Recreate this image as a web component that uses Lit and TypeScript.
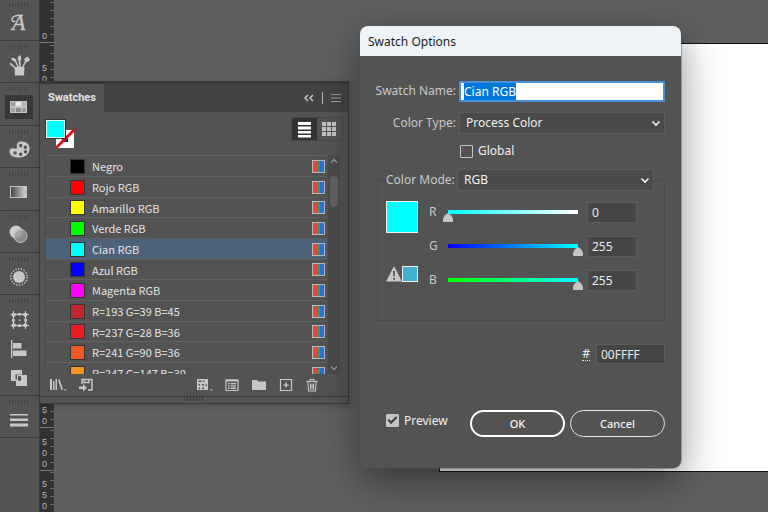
import { LitElement, html, svg, css } from "lit";
import { customElement, property, query } from "lit/decorators.js";
import { classMap } from "lit/directives/class-map.js";
import { styleMap } from "lit/directives/style-map.js";

const icon = (w: number, h: number, body: unknown) =>
  html`<svg width=${w} height=${h} viewBox="0 0 ${w} ${h}" fill="currentColor" aria-hidden="true">${body}</svg>`;

const toolIcons: Record<string, unknown> = {
  Glyphs: icon(26, 24, svg`
    <text x="6" y="19" font-family="Liberation Serif, serif" font-style="italic" font-size="22" stroke="currentColor" stroke-width=".4">A</text>
    <path d="M17 4.500C11 3.500 6 5 6 8.500C6 10.500 8 11 9 10" fill="none" stroke="currentColor" stroke-width="1.400"/>`),
  Brushes: icon(26, 24, svg`
    <path d="M8.500 14h10l-.5 8.500H9zM11.500 14L8.500 8l1.500-.5L13 14zM13.200 14l-.6-7h1.800l.4 7zM16 14l3-6 1.400.8L17.600 14z"/>
    <path d="M10.500 8.500C7 9 5 7.500 5.500 4.500 8 5 10.500 5.500 10.500 8.500zM12.200 7.500C11 5 12 3 14.200 2c1 2 1.500 4 .5 5.500zM18 6l3.500-2.500 2.500 3c-1 2-3 3-4.500 2.500zM8 15l-4.500-4.200 1.200-1L9.500 14z"/>`),
  Swatches: icon(26, 24, svg`
    <rect x="4" y="6" width="17" height="12" fill="#c4c4c4"/>
    <path d="M5 7h4v4H5z" fill="#9d9d9d"/><path d="M10 7h5v4h-5z" fill="#ececec"/><path d="M16 7h4v4h-4z" fill="#b4b4b4"/>
    <path d="M5 13h4v4H5z" fill="#a4a4a4"/><path d="M10 13h5v4h-5z" fill="#8c8c8c"/><path d="M16 13h4v4h-4z" fill="#9a9a9a"/>`),
  Color: icon(26, 24, svg`
    <path fill-rule="evenodd" d="M15 3.500c6 0 9 3.500 8.500 8-.6 5-4.700 8-10.500 8-4.500 0-9-1.500-9.500-5.500-.4-3.200 2.200-4 4.400-3.500 2 .5 3.600 0 3.100-1.900C10.300 6 11.500 3.500 15 3.500zM14.600 5.800a1.700 1.700 0 1 0 .1 0zM19.300 7.600a1.700 1.700 0 1 0 .1 0zM19.400 12a1.700 1.700 0 1 0 .1 0zM14.600 14.500a1.700 1.700 0 1 0 .1 0zM9 13.200a1.700 1.700 0 1 0 .1 0z"/>`),
  Gradient: icon(26, 24, svg`
    <defs><linearGradient id="g"><stop offset="0" stop-color="#444"/><stop offset="1" stop-color="#d4d4d4"/></linearGradient></defs>
    <rect x="4.500" y="6.500" width="16" height="11" fill="url(#g)" stroke="#c6c6c6"/>`),
  Transparency: icon(26, 24, svg`
    <circle cx="10" cy="9" r="6.500" fill="#cbcbcb"/>
    <circle cx="14.500" cy="13" r="6.500" fill="#9a9a9a" fill-opacity=".8" stroke="#c4c4c4"/>`),
  Appearance: icon(26, 24, svg`
    <circle cx="13" cy="12" r="6"/>
    <circle cx="13" cy="12" r="8.200" fill="none" stroke="currentColor" stroke-width="1.500" stroke-dasharray="1.300 1.580"/>`),
  Artboards: icon(26, 24, svg`
    <rect x="7.500" y="6.500" width="12" height="11" fill="none" stroke="currentColor" stroke-width="1.300"/>
    <path d="M6 5h3.500v3.500H6zM12 5h3v2.500h-3zM17.500 5H21v3.500h-3.500zM6 15.500h3.500V19H6zM12 16.500h3V19h-3zM17.500 15.500H21V19h-3.500zM6 11h2.500v2.500H6zM18.500 11H21v2.500h-2.500zM13 11.500h1.500V13H13z"/>
    <path d="M7.500 3v2M19.500 3v2M4.500 6.500h2M20 6.500h3M4.500 17.500h2M20 17.500h3M7.500 18v3M19.500 18v3" stroke="currentColor"/>`),
  Align: icon(26, 24, svg`<path d="M5 3h1.300v18H5zM7 6h8.500v5.500H7zM7 13.500h13.500V19H7z"/>`),
  Pathfinder: icon(26, 24, svg`
    <path fill-rule="evenodd" d="M5 4h11v5h5v11H10v-5H5zM9.500 8.500v5h1.500V9h4V8.500zM12 10.500v4h3v-4z"/>
    <path d="M12 10.500h3v4h-3z" fill="#4a4a4a"/>`),
  Stroke: icon(26, 24, svg`<path d="M4 6h18v1.500H4zM4 10.500h18V13H4zM4 15.500h18v3H4z"/>`),
};

const toolGroups = [
  ["Glyphs"], ["Brushes"], ["Swatches"], ["Color"], ["Gradient"], ["Transparency"], ["Appearance"],
  ["Artboards", "Align", "Pathfinder"], ["Stroke"],
];

const swatches = [
  { name: "Negro", color: "#000000" },
  { name: "Rojo RGB", color: "#ff0000" },
  { name: "Amarillo RGB", color: "#ffff00" },
  { name: "Verde RGB", color: "#00ff00" },
  { name: "Cian RGB", color: "#00ffff" },
  { name: "Azul RGB", color: "#0000ff" },
  { name: "Magenta RGB", color: "#ff00ff" },
  { name: "R=193 G=39 B=45", color: "#c1272d" },
  { name: "R=237 G=28 B=36", color: "#ed1c24" },
  { name: "R=241 G=90 B=36", color: "#f15a24" },
  { name: "R=247 G=147 B=30", color: "#f7931e" },
];

@customElement("tool-dock")
export class ToolDock extends LitElement {
  static styles = css`
    :host { display: block; background: #535353; border-right: 1px solid #3a3a3a; color: #c8c8c8; }
    .group { box-sizing: border-box; border-bottom: 1px solid #3a3a3a; padding: 12px 5px 1px; display: flex; flex-direction: column; gap: 5px; position: relative; min-height: 42px; }
    .group:first-child { margin-top: -1px; }
    .group:nth-child(3), .group:nth-child(5) { min-height: 43px; }
    .group::before { content: ""; position: absolute; top: 4px; left: 9px; width: 20px; height: 4px; background: repeating-linear-gradient(90deg, #424242 0 1px, transparent 1px 3px); }
    .group.many { padding-top: 13px; padding-bottom: 5px; }
    button { all: unset; display: flex; align-items: center; justify-content: center; height: 24px; width: 28px; }
    button.on { background: #383838; }
  `;
  render() {
    return toolGroups.map((g) => html`
      <div class=${classMap({ group: true, many: g.length > 1 })}>
        ${g.map((t) => html`<button class=${classMap({ on: t === "Swatches" })} aria-label=${t}>${toolIcons[t]}</button>`)}
      </div>`);
  }
}

@customElement("side-ruler")
export class SideRuler extends LitElement {
  static styles = css`
    :host { display: block; background: #323232; overflow: hidden; }
    .cell { box-sizing: border-box; height: 43px; border-bottom: 1px solid #777; display: flex; flex-direction: column; justify-content: flex-end; font: 9px/11px "Liberation Sans", sans-serif; color: #b8b8b8; padding-left: 2px;
      background: repeating-linear-gradient(0deg, transparent 0 7px, #6c6c6c 7px 8px) right bottom / 4px 100% no-repeat; }
    .cell:nth-child(4n) { height: 42px; }
  `;
  render() {
    return Array.from({ length: 12 }, (_, i) => html`
      <div class="cell">${String(i * 50).split("").map((d) => html`<span>${d}</span>`)}</div>`);
  }
}

@customElement("swatches-panel")
export class SwatchesPanel extends LitElement {
  static styles = css`
    :host { display: block; box-sizing: border-box; background: #535353; border: 1px solid #383838; border-top-width: 3px; color: #e4e4e4; font: 11px/16px "Noto Sans", sans-serif; box-shadow: 2px 2px 6px rgba(0, 0, 0, .2); }
    button { all: unset; display: flex; align-items: center; justify-content: center; color: #c6c6c6; }
    header { display: flex; background: #434343; height: 28px; }
    h2 { margin: 0; font: 700 11px/28px Roboto, sans-serif; background: #535353; width: 64px; text-align: center; }
    .tools { margin-left: auto; display: flex; align-items: center; gap: 8px; padding-right: 6px; }
    .bar { width: 1px; height: 12px; background: #b5b5b5; }
    .top { display: flex; justify-content: space-between; height: 43px; padding: 5px 5px 0 4px; box-sizing: border-box; }
    .views { display: flex; height: 22px; border: 1px solid #484848; }
    .views button { width: 25px; height: 22px; }
    .views .on { background: #323232; color: #fff; }
    .body { display: flex; height: 219px; margin: 0 8px 0 5px; }
    ul { flex: 1; list-style: none; margin: 0; padding: 0; overflow: hidden; border-left: 1px solid #4a4a4a; }
    li { box-sizing: border-box; height: 21px; display: flex; align-items: center; border-top: 1px solid #606060; padding: 0 2px 0 24px; gap: 7px; font: 11px/16px "Noto Sans CJK SC", sans-serif; }
    li:nth-child(3n) { height: 20px; }
    li.on { background: #4d6179; }
    .chip { width: 15px; height: 15px; box-sizing: border-box; border: 1px solid #333; }
    .name { flex: 1; white-space: nowrap; }
    .scroll { width: 12px; margin-left: 1px; background: #4b4b4b; display: flex; flex-direction: column; align-items: center; justify-content: space-between; }
    .thumb { width: 8px; height: 31px; border-radius: 4px; background: #626262; margin: 9px 0 auto; }
    .scroll svg { color: #999; margin: 3px 0; }
    footer { display: flex; align-items: center; height: 22px; padding: 0 29px 0 9px; }
    .left, .right { display: flex; gap: 12px; }
    .right { margin-left: auto; }
    .grip { height: 6px; border-top: 1px solid #383838; display: flex; justify-content: center; }
    .grip i { width: 20px; height: 4px; background: repeating-linear-gradient(90deg, #3c3c3c 0 1px, transparent 1px 3px); }
  `;
  render() {
    return html`
      <header>
        <h2>Swatches</h2>
        <div class="tools">
          <button aria-label="Collapse">${icon(11, 8, svg`<path d="M5 1L2 4l3 3M10 1L7 4l3 3" fill="none" stroke="currentColor" stroke-width="1.500"/>`)}</button>
          <span class="bar"></span>
          <button aria-label="Panel menu">${icon(11, 10, svg`<path d="M0 1.500h10M0 5h10M0 8.500h10" stroke="#9a9a9a" stroke-width="1.200"/>`)}</button>
        </div>
      </header>
      <div class="top">
        ${icon(32, 32, svg`
          <path fill="#fff" fill-rule="evenodd" d="M12 13h18v18H12zM18 19v6h6v-6z"/>
          <path d="M18.500 19.500h5v5h-5z" fill="#444" stroke="#222"/>
          <path d="M12 31L30.500 12.500" stroke="#d80f16" stroke-width="2.600"/>
          <rect x="1.500" y="2.500" width="20" height="19" fill="#0ff" stroke="#333"/>
          <rect x="2.500" y="3.500" width="18" height="17" fill="none" stroke="#d8ffff"/>`)}
        <div class="views">
          <button class="on" aria-label="List view">${icon(15, 17, svg`<path d="M1 1h13v3H1zM1 5.500h13v3H1zM1 10h13v2.500H1zM1 14h13v2.500H1z"/>`)}</button>
          <button aria-label="Thumbnail view">${icon(17, 17, svg`<path d="M1 1h4v4H1zM6 1h4v4H6zM11 1h4v4h-4zM1 6h4v4H1zM6 6h4v4H6zM11 6h4v4h-4zM1 11h4v4H1zM6 11h4v4H6zM11 11h4v4h-4z"/>`)}</button>
        </div>
      </div>
      <div class="body">
        <ul>
          ${swatches.map((s) => html`
            <li class=${classMap({ on: s.name === "Cian RGB" })}>
              <span class="chip" style=${styleMap({ background: s.color })}></span>
              <span class="name">${s.name}</span>
              ${icon(13, 13, svg`<rect x=".5" y=".5" width="12" height="12" fill="#e4483f" stroke="#b9b9b9"/><path d="M5 1h3v11H5z" fill="#3f9a50"/><path d="M8 1h4v11H8z" fill="#2a6fe0"/>`)}
            </li>`)}
        </ul>
        <div class="scroll">
          ${icon(8, 6, svg`<path d="M1 4.500l3-3 3 3" fill="none" stroke="currentColor" stroke-width="1.300"/>`)}
          <span class="thumb"></span>
          ${icon(8, 6, svg`<path d="M1 1.500l3 3 3-3" fill="none" stroke="currentColor" stroke-width="1.300"/>`)}
        </div>
      </div>
      <footer>
        <div class="left">
          <button aria-label="Swatch Libraries">${icon(18, 14, svg`<path d="M1 1h2v11H1zM4 3h1.500v9H4zM6.500 1h1.500v11H6.500zM9 2l1.600-.6L14 11.500l-1.700.6zM15.500 11h1.600v1.500h-1.600z"/>`)}</button>
          <button aria-label="Add to Library">${icon(14, 14, svg`<path d="M3 6V1.500h10V12H9M5 1.500v3h5v-3" fill="none" stroke="currentColor" stroke-width="1.500"/><path d="M0 8.500h4V6l4 3.800L4 13.500V11H0z"/>`)}</button>
        </div>
        <div class="right">
          <button aria-label="Show Swatch Kinds">${icon(16, 14, svg`<path fill-rule="evenodd" d="M0 1h11v11H0zM1.500 2.500v1.500h3V2.500zM6 2.500V4h1.500V2.500zM1.500 6v1.500H3V6zM5 6v1.500h2V6zM5 9.500v1.500h2V9.500zM1.500 9.500V11H3V9.500zM8.500 6.500V8H10V6.500z"/><path d="M13.500 11h1.700v1.500h-1.700z"/>`)}</button>
          <button aria-label="Swatch Options">${icon(14, 14, svg`<path d="M1 2h12v10.500H1z" fill="none" stroke="currentColor" stroke-width="1.200"/><path d="M1 1.500h12v2H1zM3 5h1.500v1.300H3zM5.500 5H11v1.300H5.500zM3 7.300h1.500v1.300H3zM5.500 7.300H11v1.300H5.500zM3 9.600h1.500v1.300H3zM5.500 9.600H11v1.300H5.500z"/>`)}</button>
          <button aria-label="New Color Group">${icon(16, 14, svg`<path d="M1 2h5l1.500 1.500H15V12H1z"/>`)}</button>
          <button aria-label="New Swatch">${icon(14, 14, svg`<path d="M1.500 1.500h11v11h-11z" fill="none" stroke="currentColor" stroke-width="1.200"/><path d="M6.400 4.500h1.300v1.900h1.900v1.300H7.700v1.900H6.400V7.700H4.500V6.400h1.900z"/>`)}</button>
          <button aria-label="Delete Swatch">${icon(14, 14, svg`<path d="M1.500 3.500h11M5 3V1.500h4V3M3 4l.5 9h7l.5-9M5.500 5.500v6M7 5.500v6M8.500 5.500v6" fill="none" stroke="currentColor" stroke-width="1.100"/>`)}</button>
        </div>
      </footer>
      <div class="grip"><i></i></div>`;
  }
}

@customElement("channel-row")
export class ChannelRow extends LitElement {
  @property() label = "";
  @property({ type: Number }) value = 0;
  @property() from = "";
  @property() to = "";
  static styles = css`
    :host { display: flex; align-items: center; height: 22px; font: 12px/16px "Noto Sans", sans-serif; color: #c8c8c8; }
    label { width: 14px; }
    .range { -webkit-appearance: none; appearance: none; flex: 1; min-width: 0; height: 20px; margin: 0 4px 0 0; outline: none; border: 0;
      background-position: center 8px; background-size: calc(100% - 10px) 4px; background-repeat: no-repeat; background-color: transparent; }
    .range::-webkit-slider-runnable-track { height: 20px; background: transparent; }
    .range::-webkit-slider-thumb { -webkit-appearance: none; width: 10px; height: 9px; margin-top: 11px; background: #c6c6c6; border: 0; border-radius: 0 0 1px 1px; clip-path: polygon(50% 0, 80% 25%, 100% 60%, 100% 100%, 0 100%, 0 60%, 20% 25%); }
    .num { box-sizing: border-box; width: 50px; height: 21px; border: 1px solid #5c5c5c; background: #454545; color: #ececec; font: inherit; padding: 0 4px; outline: none; }
  `;
  render() {
    return html`
      <label for="r">${this.label}</label>
      <input id="r" class="range" type="range" min="0" max="255" .value=${String(this.value)}
        style=${styleMap({ backgroundImage: `linear-gradient(90deg, ${this.from}, ${this.to})` })} />
      <input class="num" type="text" aria-label="${this.label} value" .value=${String(this.value)} />`;
  }
}

@customElement("swatch-dialog")
export class SwatchDialog extends LitElement {
  @query("#name") nameField!: HTMLInputElement;
  static styles = css`
    :host { display: block; background: #535353; border-radius: 8px; overflow: hidden; color: #f0f0f0; font: 12px/16px "Noto Sans", sans-serif; box-shadow: 0 0 0 1px rgba(80, 80, 80, .4), 0 12px 40px rgba(0, 0, 0, .45); }
    h1 { margin: 0; background: #eef3f8; color: #1c1c1c; font-size: 12px; font-weight: 400; line-height: 32px; height: 30px; padding-left: 8px; }
    form { padding: 24px 16px 31px 17px; }
    .row { display: flex; align-items: center; height: 22px; gap: 3px; }
    .row > label:first-child { width: 79px; color: #c8c8c8; white-space: nowrap; display: flex; justify-content: flex-end; }
    .name { box-sizing: border-box; flex: 1; min-width: 0; height: 21px; border: 2px solid #4a90d9; background: #fff; color: #222; font: inherit; padding: 0 3px; outline: none; }
    .name::selection { background: #0078d7; color: #fff; }
    .type { margin-top: 10px; }
    .select { flex: 1; display: flex; position: relative; }
    select { -webkit-appearance: none; appearance: none; flex: 1; height: 22px; box-sizing: border-box; border: 1px solid #5c5c5c; border-radius: 0; background: #4a4a4a; color: #f0f0f0; font: inherit; padding: 0 6px; outline: none; }
    .select svg { position: absolute; right: 4px; top: 8px; pointer-events: none; }
    .global { margin: 6px 0 0 83px; }
    .global label, .preview { display: flex; align-items: center; gap: 5px; white-space: nowrap; }
    .global > label:first-child { color: #f0f0f0; width: auto; }
    input[type="checkbox"] { -webkit-appearance: none; appearance: none; margin: 0; width: 13px; height: 13px; box-sizing: border-box; border: 1px solid #c4c4c4; border-radius: 1px; display: grid; place-items: center; }
    input[type="checkbox"]:checked { background: #c4c4c4; }
    input[type="checkbox"]:checked::before { content: ""; width: 7px; height: 3px; border: solid #3c3c3c; border-width: 0 0 2px 2px; transform: rotate(-45deg) translate(1px, -1px); }
    fieldset { margin: 7px 0 0; padding: 0 27px 29px 8px; border: 1px solid #4a4a4a; min-width: 0; }
    legend { padding: 0; display: flex; align-items: center; gap: 4px; width: calc(100% + 17px); height: 22px; color: #c8c8c8; }
    legend label { white-space: nowrap; width: 67px; }
    .mix { display: flex; gap: 10px; margin-top: 10px; }
    .prev { display: flex; flex-direction: column; gap: 33px; width: 33px; }
    .big { width: 32px; height: 32px; box-sizing: border-box; border: 1px solid #f0f0f0; background: #0ff; }
    .warn { display: flex; align-items: center; }
    .near { width: 16px; height: 16px; box-sizing: border-box; border: 1px solid #f0f0f0; background: #42b0cf; }
    .rows { flex: 1; display: flex; flex-direction: column; gap: 12px; }
    .hex { justify-content: flex-end; margin-top: 22px; gap: 6px; }
    .hex > label:first-child { width: auto; color: #f0f0f0; line-height: 13px; border-bottom: 1px dotted #ddd; }
    .code { box-sizing: border-box; width: 69px; height: 20px; border: 1px solid #5c5c5c; background: #454545; color: #ececec; font: inherit; padding: 0 4px; outline: none; }
    .foot { display: flex; align-items: center; margin: 45px 0 0 9px; }
    .buttons { margin-left: auto; display: flex; gap: 5px; }
    .buttons button { box-sizing: border-box; width: 95px; height: 27px; border: 1px solid #e4e4e4; border-radius: 14px; background: transparent; color: #f4f4f4; font: 500 11px/16px "Noto Sans", sans-serif; padding: 0; }
    .buttons .ok { border: 2px solid #fff; }
    .preview { padding-bottom: 6px; }
  `;
  firstUpdated() {
    this.nameField.focus();
    this.nameField.select();
  }
  render() {
    const chevron = icon(10, 7, svg`<path d="M1.500 1.500l3.500 3.500 3.500-3.500" fill="none" stroke="#f0f0f0" stroke-width="1.700"/>`);
    return html`
      <h1>Swatch Options</h1>
      <form @submit=${(e: Event) => e.preventDefault()}>
        <div class="row"><label for="name">Swatch Name:</label><input id="name" class="name" type="text" spellcheck="false" value="Cian RGB" /></div>
        <div class="row type"><label for="type">Color Type:</label>
          <span class="select"><select id="type"><option>Process Color</option><option>Spot Color</option></select>${chevron}</span></div>
        <div class="row global"><label><input type="checkbox" />Global</label></div>
        <fieldset>
          <legend><label for="mode">Color Mode:</label>
            <span class="select"><select id="mode"><option>RGB</option><option>CMYK</option></select>${chevron}</span></legend>
          <div class="mix">
            <div class="prev">
              <div class="big"></div>
              <div class="warn">${icon(16, 16, svg`<path fill-rule="evenodd" fill="#c8c8c8" d="M8 0l8 15.500H0zM7 5l.4 5.500h1.400L9 5zM7 12v1.800h2V12z"/>`)}<span class="near"></span></div>
            </div>
            <div class="rows">
              <channel-row label="R" value="0" from="#00ffff" to="#ffffff"></channel-row>
              <channel-row label="G" value="255" from="#0000ff" to="#00ffff"></channel-row>
              <channel-row label="B" value="255" from="#00ff00" to="#00ffff"></channel-row>
            </div>
          </div>
        </fieldset>
        <div class="row hex"><label for="hex">#</label><input id="hex" class="code" type="text" value="00FFFF" /></div>
        <div class="foot">
          <label class="preview"><input type="checkbox" checked />Preview</label>
          <div class="buttons"><button class="ok" type="submit">OK</button><button type="button">Cancel</button></div>
        </div>
      </form>`;
  }
}

@customElement("app-root")
export class AppRoot extends LitElement {
  static styles = css`
    :host { display: grid; grid-template-columns: 40px 14px 1fr; height: 100vh; overflow: hidden; position: relative; background: #606060; }
    .canvas { position: relative; overflow: hidden; }
    .artboard { position: absolute; left: 385px; right: -20px; top: 43px; height: 427px; background: #fff; border: 1px solid #111; }
    .panel { position: absolute; left: 39px; top: 81px; width: 310px; }
    .dialog { position: absolute; left: 360px; top: 26px; width: 321px; }
  `;
  render() {
    return html`
      <tool-dock></tool-dock>
      <side-ruler></side-ruler>
      <main class="canvas"><div class="artboard"></div></main>
      <swatches-panel class="panel"></swatches-panel>
      <swatch-dialog class="dialog"></swatch-dialog>`;
  }
}
